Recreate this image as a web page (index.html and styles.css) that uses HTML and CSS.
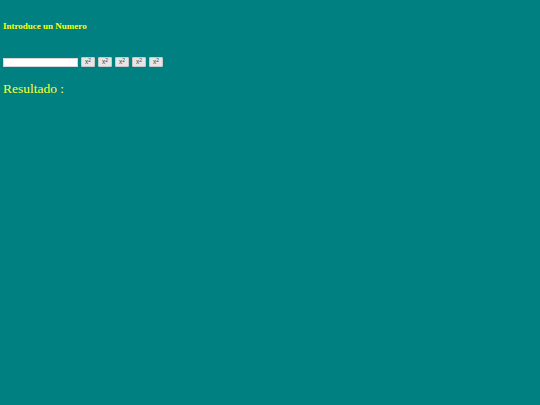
FILE: index.html
```html
<!DOCTYPE html>
<html>
<head>
<meta charset="utf-8">
<link rel="stylesheet" href="styles.css">
</head>
<body>
<h5 class="title">Introduce un Numero</h5>
<div class="controls">
  <input class="num" type="text">
  <button class="op">x<sup>2</sup></button>
  <button class="op">x<sup>2</sup></button>
  <button class="op">x<sup>2</sup></button>
  <button class="op">x<sup>2</sup></button>
  <button class="op">x<sup>2</sup></button>
</div>
<p class="result">Resultado :</p>
</body>
</html>
```
FILE: styles.css
```css
html, body { margin: 0; padding: 0; }
body {
  background: #008080;
  font-family: "Liberation Serif", "Times New Roman", serif;
  padding: 0 3px;
  height: 405px;
}
.title {
  margin: 0;
  padding-top: 20px;
  font-size: 9px;
  font-weight: bold;
  color: #ffff00;
  line-height: 12px;
}
.controls {
  margin-top: 24px;
  display: flex;
  align-items: flex-end;
  gap: 3px;
  height: 11px;
}
.num {
  width: 75px;
  height: 9px;
  box-sizing: border-box;
  border: 1px solid #d8d8d8;
  background: #fff;
  padding: 0;
  margin: 0;
}
.op {
  width: 14px;
  height: 10px;
  box-sizing: border-box;
  padding: 0;
  margin: 0;
  font-family: "Liberation Sans", Arial, sans-serif;
  font-size: 6.5px;
  line-height: 8px;
  color: #444;
  background: #e6e6e6;
  border: 1px solid #c8c8c8;
  border-radius: 1px;
}
.op sup { font-size: 5px; vertical-align: 2px; line-height: 0; }
.result {
  margin: 13px 0 0 0;
  font-size: 13.5px;
  color: #ffff33;
  line-height: 18px;
}
```
